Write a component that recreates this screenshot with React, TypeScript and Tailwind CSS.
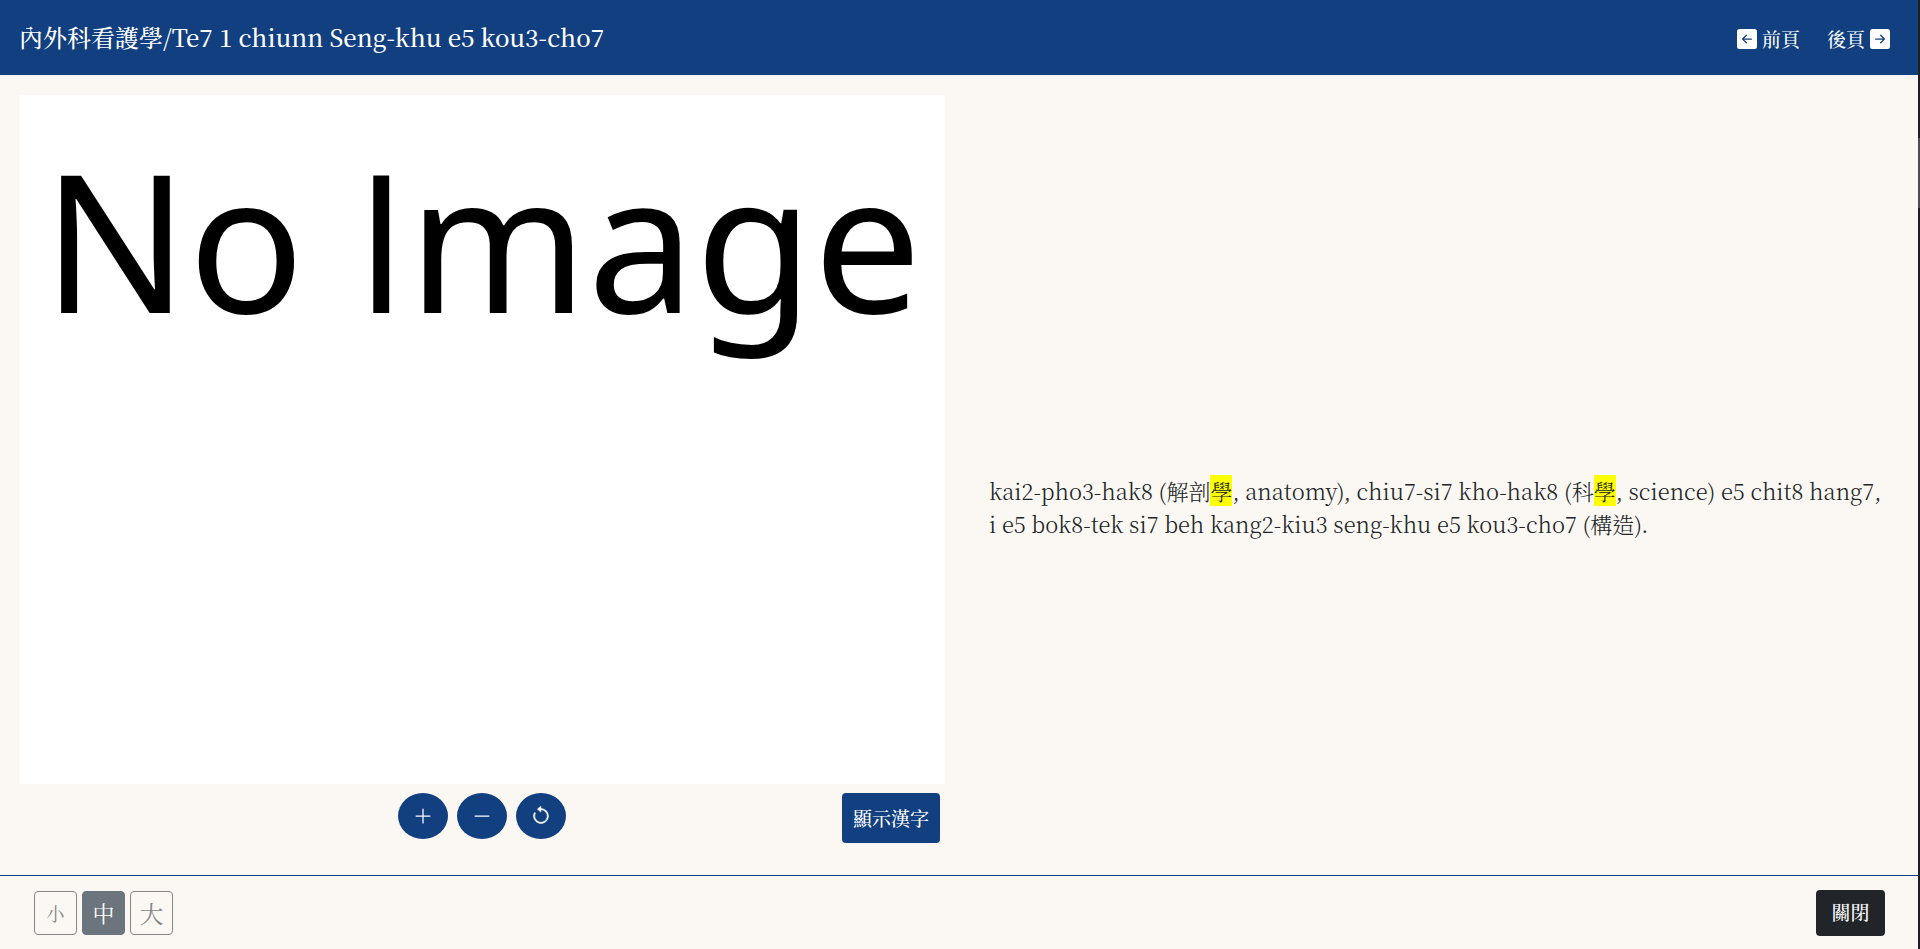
import React, { useState } from 'react';
import {
  BsArrowCounterclockwise,
  BsArrowLeftSquareFill,
  BsArrowRightSquareFill,
  BsDashLg,
  BsPlusLg,
} from 'react-icons/bs';

const sizes = [
  { label: '小', name: 'small', className: 'text-lg' },
  { label: '中', name: 'medium', className: 'text-[22px]' },
  { label: '大', name: 'large', className: 'text-2xl' },
];

const zoomClass = 'flex h-[46px] w-[50px] items-center justify-center rounded-[50%] bg-[#113f7f] text-white';

const Mark = ({ children }: { children: React.ReactNode }) => (
  <mark className="bg-[#ffff00] text-inherit">{children}</mark>
);

const Header = () => (
  <header className="flex h-[75px] items-center justify-between bg-[#113f7f] pl-[19px] pr-7 text-white">
    <h1 className="pb-px text-2xl font-medium">內外科看護學/Te7 1 chiunn Seng-khu e5 kou3-cho7</h1>
    <nav className="flex gap-[27px] pt-[3px] text-[19px] font-medium">
      <a href="#prev" className="flex items-center gap-[5px]">
        <BsArrowLeftSquareFill size={20} />
        前頁
      </a>
      <a href="#next" className="flex items-center gap-[5px]">
        後頁
        <BsArrowRightSquareFill size={20} />
      </a>
    </nav>
  </header>
);

const ImagePanel = () => (
  <section className="flex flex-col pb-8 pl-[19px] pr-[14px] pt-5">
    <div className="flex-1 overflow-hidden bg-white pt-[9px] text-center">
      <span className="whitespace-nowrap font-['Noto_Sans',sans-serif] text-[192px] leading-[270px] text-black">
        No <span className="font-['Open_Sans',sans-serif]">I</span>mage
      </span>
    </div>
    <div className="grid h-[59px] grid-cols-3 items-start pt-[9px]">
      <div className="col-start-2 flex justify-center gap-[9px]">
        <button aria-label="Zoom in" className={zoomClass}><BsPlusLg size={20} /></button>
        <button aria-label="Zoom out" className={zoomClass}><BsDashLg size={20} /></button>
        <button aria-label="Reset" className={zoomClass}>
          <BsArrowCounterclockwise size={20} stroke="currentColor" strokeWidth="0.4" />
        </button>
      </div>
      <button className="mr-[5px] h-[50px] justify-self-end rounded bg-[#113f7f] px-[11px] text-[19px] font-medium text-white">
        顯示漢字
      </button>
    </div>
  </section>
);

const App = () => {
  const [size, setSize] = useState('medium');

  return (
    <div className="flex min-h-screen bg-[#fbf8f3] font-['Noto_Serif_CJK_TC','Liberation_Serif','Noto_Sans_CJK_TC',serif] text-[#212529]">
      <div className="flex min-w-0 flex-1 flex-col">
        <Header />
        <main className="grid flex-1 grid-cols-2">
          <ImagePanel />
          <section className="flex items-center pl-[30px] pr-6 pt-16">
            <p className="text-[22px] font-light leading-[33px]">
              kai2-pho3-hak8 (解剖<Mark>學</Mark>, anatomy), chiu7-si7 kho-hak8 (科<Mark>學</Mark>, science) e5 chit8 hang7,
              <br />
              i e5 bok8-tek si7 beh kang2-kiu3 seng-khu e5 kou3-cho7 (構造).
            </p>
          </section>
        </main>
        <footer className="flex h-[74px] items-center justify-between border-t border-[#113f7f] pl-[34px] pr-[33px]">
          <div className="flex gap-[5px]">
            {sizes.map((s) => (
              <button
                key={s.name}
                onClick={() => setSize(s.name)}
                className={`h-11 w-[43px] rounded border ${s.className} ${
                  size === s.name ? 'border-[#6c757d] bg-[#6c757d] text-white' : 'border-[#868686] text-[#868686]'
                }`}
              >
                {s.label}
              </button>
            ))}
          </div>
          <button className="h-[46px] w-[69px] rounded bg-[#212529] text-[19px] font-medium text-white">關閉</button>
        </footer>
      </div>
      {/* scroll track */}
      <div className="w-[2px] bg-[#1f1f1f] pt-[138px]">
        <div className="h-[70px] bg-[#4d4d4d]" />
      </div>
    </div>
  );
};

export default App;
